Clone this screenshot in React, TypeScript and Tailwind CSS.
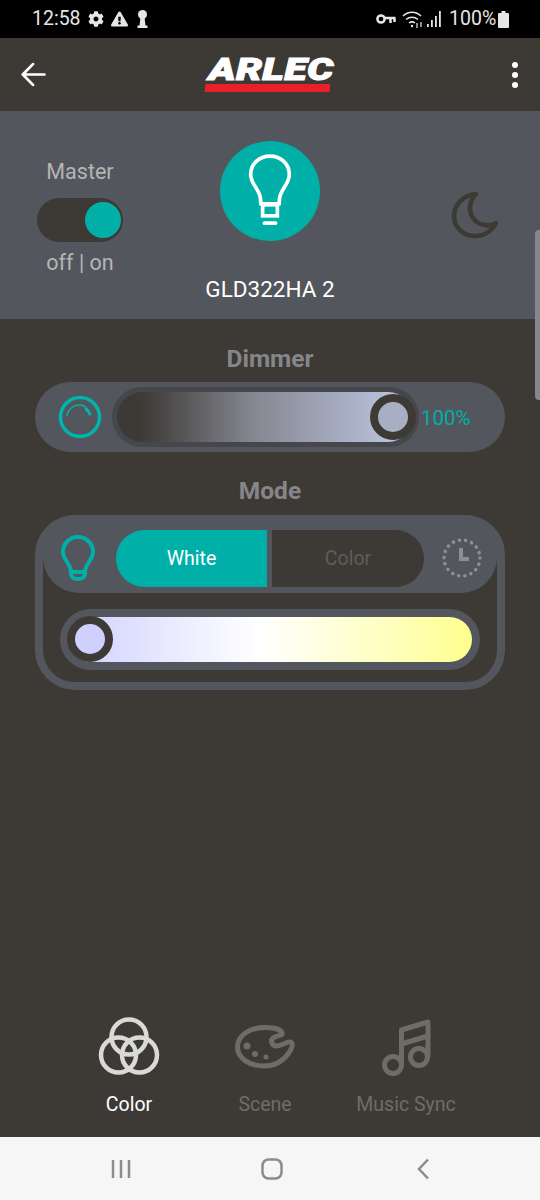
import { FaCog, FaExclamationTriangle } from "react-icons/fa";

const roboto = "font-['Roboto','Liberation_Sans',sans-serif]";

function StatusBar() {
    return (
        <div className="h-[38px] bg-black flex items-center justify-between pl-[32px] pr-[31px] text-[#e6e6e6] text-[19.5px] leading-none">
            <div className="flex items-center">
                <span className="w-[47px]">12:58</span>
                <FaCog className="ml-[9px] w-[16px] h-[16px]" />
                <FaExclamationTriangle className="ml-[7px] w-[17px] h-[16px]" />
                <svg viewBox="0 0 11 18" className="ml-[9px] w-[11px] h-[18px]" fill="#e6e6e6">
                    <circle cx="5.5" cy="4.5" r="4.5" />
                    <path d="M3.5 7h4l1 8.500h2V18H.5v-2.500h2z" />
                </svg>
            </div>
            <div className="flex items-center">
                {/* key */}
                <svg viewBox="0 0 20 12" className="w-[20px] h-[12px]" fill="none" stroke="#e6e6e6" strokeWidth="2.500">
                    <circle cx="5" cy="6" r="3.600" />
                    <path d="M9 5h10.500M14.500 5v5M18.500 5v4" />
                </svg>
                {/* wifi */}
                <svg viewBox="0 0 22 20" className="ml-[6px] w-[22px] h-[20px]" fill="none" stroke="#e6e6e6" strokeWidth="1.500">
                    <path d="M1 7c5-5 13-5 18 0M4 10.500c3.500-3 8.500-3 12 0M7 14c2-1.500 4-1.500 6 0" />
                    <circle cx="10" cy="17" r="1.200" fill="#e6e6e6" stroke="none" />
                    <path d="M15 14v5M19 13v5" strokeWidth="1.200" />
                </svg>
                {/* signal */}
                <svg viewBox="0 0 14 16" className="ml-[3px] w-[14px] h-[16px]" fill="#e6e6e6">
                    <rect x="0" y="13" width="1.800" height="3" />
                    <rect x="4" y="9" width="1.800" height="7" />
                    <rect x="8" y="5" width="1.800" height="11" />
                    <rect x="12" y="0" width="1.800" height="16" />
                </svg>
                <span className="ml-[8px] w-[46px]">100%</span>
                <svg viewBox="0 0 11 17" className="ml-[3px] w-[11px] h-[17px]" fill="#e6e6e6">
                    <path d="M3.500 0h4v2H10a1 1 0 0 1 1 1v13a1 1 0 0 1-1 1H1a1 1 0 0 1-1-1V3a1 1 0 0 1 1-1h2.500z" />
                </svg>
            </div>
        </div>
    );
}

function Header() {
    return (
        <div className="h-[73px] bg-[#3d3a36] flex items-center justify-between pl-[21px] pr-[22px]">
            <svg viewBox="0 0 24 24" className="w-[25px] h-[25px]" fill="none" stroke="#fff" strokeWidth="2.600" strokeLinecap="round" strokeLinejoin="round">
                <path d="M22.500 12H2M11.500 2 1.700 12l9.800 10" />
            </svg>
            {/* logo */}
            <div className="flex flex-col items-center w-[134px]">
                <span className="font-['Roboto',sans-serif] font-black italic text-white text-[31px] leading-[25px] h-[25px] -mt-[1px] ml-[2px] scale-x-[1.33] tracking-[0.2px] [-webkit-text-stroke:1px_white]">
                    ARLEC
                </span>
                <div className="mt-[2px] h-[8px] w-[125px] mr-[4px] bg-[#e8202a] -skew-x-6" />
            </div>
            <div className="w-[25px] flex justify-end">
                <div className="flex flex-col gap-[4px]">
                    <div className="w-[6px] h-[6px] rounded-full bg-white" />
                    <div className="w-[6px] h-[6px] rounded-full bg-white" />
                    <div className="w-[6px] h-[6px] rounded-full bg-white" />
                </div>
            </div>
        </div>
    );
}

function TopPanel() {
    return (
        <div className="h-[208px] bg-[#53565c] flex">
            <div className="w-[160px] pt-[48px] flex flex-col items-center text-[#b5b5b5] text-[21.500px]">
                <span className="leading-[26px]">Master</span>
                <div className="mt-[13px] w-[86px] h-[44px] rounded-full bg-[#3d3a36] flex items-center justify-end pr-[2px]">
                    <div className="w-[36px] h-[36px] rounded-full bg-[#00b0a8]" />
                </div>
                <span className="mt-[8px] leading-[26px]">off | on</span>
            </div>
            <div className="w-[220px] pt-[30px] flex flex-col items-center">
                <div className="w-[100px] h-[100px] rounded-full bg-[#00b0a8] flex items-center justify-center">
                    <svg viewBox="0 0 50 84" className="w-[46px] h-[80px]" fill="none" stroke="#fff" strokeWidth="4">
                        <path d="M25 4C13 4 4 13 4 24c0 9 7 14 10 23 1 3 1 5 1 9h20c0-4 0-6 1-9 3-9 10-14 10-23C46 13 37 4 25 4Z" strokeLinejoin="round" />
                        <rect x="17" y="57" width="16" height="12" />
                        <path d="M19 77h12" strokeWidth="4" strokeLinecap="round" />
                    </svg>
                </div>
                <span className="mt-[35px] text-white text-[22.500px] leading-[26px]">GLD322HA 2</span>
            </div>
            <div className="flex-1 pt-[80px] pl-[71px]">
                <svg viewBox="0 0 48 48" className="w-[48px] h-[48px]" fill="none" stroke="#3d3a36" strokeWidth="4.500" strokeLinejoin="round">
                    <path d="M25 3C13 4 3 13 3 25c0 11 9 20 21 20 9 0 17-5 21-13-3 2-7 3-11 2C24 33 18 24 19 15c1-5 3-9 6-12Z" />
                </svg>
            </div>
        </div>
    );
}

function DimmerCard() {
    return (
        <div className="h-[70px] rounded-full bg-[#53565c] flex items-center">
            <svg viewBox="0 0 44 44" className="ml-[23px] w-[44px] h-[44px]" fill="none" stroke="#00b5ad">
                <circle cx="22" cy="22" r="19.500" strokeWidth="3.500" />
                <path d="M9 21C10 13 17 10 21 10c5 0 9 3 11 9" strokeWidth="1.500" />
                <path d="M28 14c2 2 3 3 4 5" strokeWidth="3" strokeLinecap="round" />
            </svg>
            <div className="relative ml-[10px] w-[307px] h-[60px] rounded-full bg-[#46474c] p-[5px] pr-[6px]">
                <div className="h-full rounded-full bg-gradient-to-r from-[#3d3a36] from-8% via-[#84868f] via-45% to-[#bcc4e0] to-95%" />
                <div className="absolute right-[3px] top-[7px] w-[46px] h-[46px] rounded-full bg-[#a8aec4] border-[8px] border-[#3d3a36]" />
            </div>
            <span className="ml-[2px] text-[#00b0a8] text-[20.500px] leading-none pt-[2px]">100%</span>
        </div>
    );
}

function ModeCard() {
    return (
        <div className="h-[175px] rounded-[40px] border-[8px] border-[#53565c]">
            <div className="-mt-[8px] h-[78px] pt-[8px] bg-[#53565c] rounded-t-[32px] rounded-b-[36px] flex items-center">
                <svg viewBox="0 0 36 48" className="ml-[17px] w-[36px] h-[48px]" fill="none" stroke="#00b0a8" strokeWidth="4" strokeLinejoin="round">
                    <path d="M18 3C9 3 3 10 3 18c0 8 8 12 8 20h14c0-8 8-12 8-20C33 10 27 3 18 3Z" />
                    <path d="M11 36v4c0 3 3 5 7 5s7-2 7-5v-4" />
                </svg>
                <div className="ml-[20px] w-[308px] h-[57px] flex text-[19.500px]">
                    <div className="w-[151px] pt-[2px] bg-[#00b0a8] rounded-l-full flex items-center justify-center text-white">
                        White
                    </div>
                    <div className="ml-[5px] w-[152px] pt-[2px] bg-[#3d3a36] rounded-r-full flex items-center justify-center text-[#5e5d5c]">
                        Color
                    </div>
                </div>
                <svg viewBox="0 0 40 40" className="ml-[18px] w-[40px] h-[40px]" fill="none" stroke="#8e8f92">
                    <circle cx="20" cy="20" r="18" strokeWidth="3.500" strokeDasharray="0.100 6.183" strokeLinecap="round" />
                    <path d="M19 10v11h8" strokeWidth="4" />
                </svg>
            </div>
            <div className="relative mt-[16px] mx-[17px] h-[61px] rounded-full bg-[#53565c] p-[8px]">
                <div className="h-full rounded-full bg-gradient-to-r from-[#d0d0ff] via-white via-47% to-[#ffff8c]" />
                <div className="absolute left-[7px] top-[7px] w-[46px] h-[46px] rounded-full bg-[#d0d0ff] border-[8px] border-[#3d3a36]" />
            </div>
        </div>
    );
}

function BottomTabs() {
    return (
        <div className="h-[120px] flex text-[19.500px] leading-[24px]">
            <div className="w-[196px] pl-[62px] flex flex-col items-center text-white">
                <svg viewBox="0 0 62 58" className="w-[62px] h-[58px] shrink-0" fill="none" stroke="#d9d9d6" strokeWidth="4.500">
                    <circle cx="31" cy="20" r="17.500" />
                    <circle cx="20.500" cy="38" r="17.500" />
                    <circle cx="41.500" cy="38" r="17.500" />
                </svg>
                <span className="mt-[18px]">Color</span>
            </div>
            <div className="w-[138px] flex flex-col items-center text-[#6f6c67]">
                <svg viewBox="0 0 60 44" className="mt-[8px] w-[60px] h-[44px] shrink-0" fill="none" stroke="#6f6c67" strokeWidth="5" strokeLinejoin="round">
                    <path d="M2.500 22C2.500 10 15 2.500 30 2.500c8 0 16 1.500 17 5.500 1 3-5 2-9 5-3 3-1 8 4 8s10-5 13-4c4 1 2 7-2 12-6 8-15 12-24 12C14 41 2.500 33 2.500 22Z" />
                    <circle cx="12" cy="21" r="3.500" fill="#6f6c67" stroke="none" />
                    <circle cx="20" cy="29" r="3" fill="#6f6c67" stroke="none" />
                    <circle cx="31" cy="32" r="2.500" fill="#6f6c67" stroke="none" />
                </svg>
                <span className="mt-[24px] whitespace-nowrap">Scene</span>
            </div>
            <div className="w-[144px] flex flex-col items-center text-[#6f6c67]">
                <svg viewBox="0 0 50 60" className="w-[50px] h-[60px] shrink-0" fill="none" stroke="#6f6c67" strokeWidth="5" strokeLinejoin="round">
                    <circle cx="12" cy="48" r="8.500" />
                    <circle cx="38" cy="40" r="8.500" />
                    <path d="M20.500 48V13L47 5v35M20.500 27 47 19" />
                </svg>
                <span className="mt-[16px] whitespace-nowrap">Music Sync</span>
            </div>
        </div>
    );
}

function NavBar() {
    return (
        <div className="h-[63px] bg-[#f6f6f6] flex items-center">
            <svg viewBox="0 0 20 20" className="ml-[111px] w-[20px] h-[20px]" fill="none" stroke="#8c8c8c" strokeWidth="2.500">
                <path d="M2 1v18M10 1v18M18 1v18" />
            </svg>
            <svg viewBox="0 0 22 22" className="ml-[130px] w-[22px] h-[22px]" fill="none" stroke="#8c8c8c" strokeWidth="2.500">
                <rect x="1.500" y="1.500" width="19" height="19" rx="6" />
            </svg>
            <svg viewBox="0 0 14 22" className="ml-[133px] w-[14px] h-[22px]" fill="none" stroke="#8c8c8c" strokeWidth="2.500">
                <path d="M12 1.500 3 11l9 9.500" />
            </svg>
        </div>
    );
}

export default function App() {
    return (
        <div className={`relative w-[540px] h-[1200px] overflow-hidden flex flex-col bg-[#3d3a36] ${roboto}`}>
            <StatusBar />
            <Header />
            <TopPanel />

            {/* scroll indicator */}
            <div className="absolute right-0 top-[230px] w-[5px] h-[170px] rounded-l-[4px] bg-[#85878b]" />

            <div className="flex-1 px-[35px] pt-[26px]">
                <div className="h-[28px] text-center text-[#85868a] font-bold text-[24.500px] leading-[28px]">Dimmer</div>
                <div className="mt-[9px]">
                    <DimmerCard />
                </div>
                <div className="mt-[25px] h-[28px] text-center text-[#85868a] font-bold text-[24.500px] leading-[28px]">Mode</div>
                <div className="mt-[10px]">
                    <ModeCard />
                </div>
            </div>

            <BottomTabs />
            <NavBar />
        </div>
    );
}
